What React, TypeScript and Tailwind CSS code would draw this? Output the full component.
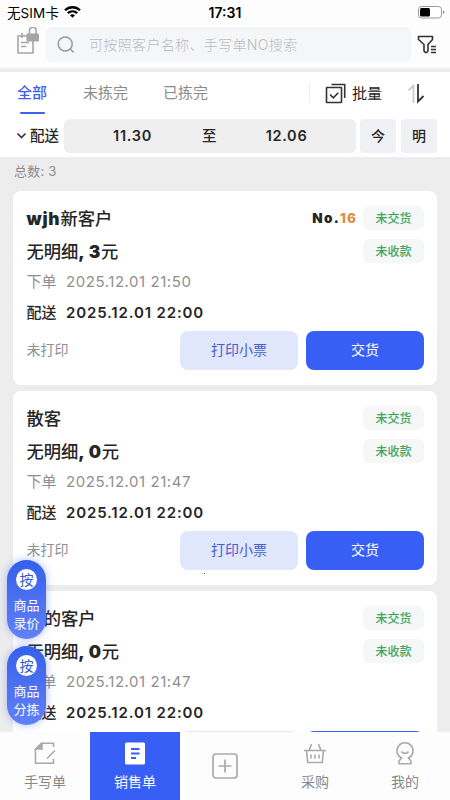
import type { ReactNode } from "react";

interface Order {
  id: number;
  name: ReactNode;
  no?: number;
  amount: number;
  created: string;
  delivery: string;
}

const orders: Order[] = [
  {
    id: 1,
    name: (
      <>
        <b className="font-black tracking-[0.8px]">wjh</b>新客户
      </>
    ),
    no: 16,
    amount: 3,
    created: "2025.12.01 21:50",
    delivery: "2025.12.01 22:00",
  },
  { id: 2, name: "散客", amount: 0, created: "2025.12.01 21:47", delivery: "2025.12.01 22:00" },
  { id: 3, name: "我的客户", amount: 0, created: "2025.12.01 21:47", delivery: "2025.12.01 22:00" },
];

export default function App() {
  return (
    <div className="relative flex h-[800px] w-[450px] flex-col overflow-hidden bg-[#ededed] font-['Inter','Noto_Sans_CJK_SC',sans-serif] text-[#262626]">
      <StatusBar />
      <SearchBar />
      <Filters />
      <div className="flex min-h-0 flex-1 flex-col overflow-hidden px-[13px]">
        <div className="h-[34px] shrink-0 pl-px text-[13px] leading-[29px] tracking-[0.2px] text-[#8c8c8c]">总数: 3</div>
        <div className="flex flex-col gap-1.5">
          {orders.map((order) => (
            <OrderCard key={order.id} order={order} />
          ))}
        </div>
      </div>
      <TabBar />
      <div className="absolute top-[560px] left-[7px] flex flex-col gap-[7px]">
        <FloatButton second="录价" />
        <FloatButton second="分拣" />
      </div>
      <span className="absolute top-[573px] left-[204px] size-px bg-[#604040]" />
    </div>
  );
}

const StatusBar = () => (
  <div className="grid h-6 shrink-0 grid-cols-3 items-center bg-[#fdfdfd] pr-[5px] pl-[7px] text-black">
    <div className="flex items-center gap-[5px] pt-px text-[13.5px] leading-[22px]">
      <span className="tracking-[0.1px]">无SIM卡</span>
      <svg className="-mt-px" width="17" height="12" viewBox="0 0 17 12" fill="none" stroke="#000" strokeWidth="2.3">
        <path d="M1 4.3C5.2.2 11.8.2 16 4.3" />
        <path d="M3.8 7.2c2.7-2.5 6.7-2.5 9.4 0" />
        <path d="M8.5 11.7 6 9.2c1.4-1.3 3.6-1.3 5 0Z" fill="#000" stroke="none" />
      </svg>
    </div>
    <span className="pr-[2px] text-center text-[14px] font-semibold">17:31</span>
    <div className="flex justify-end">
      <svg width="27" height="13" viewBox="0 0 27 13">
        <rect x=".5" y=".5" width="23" height="11.5" rx="3" fill="#fff" stroke="#999" />
        <rect x="2" y="2" width="10" height="8.5" rx="1.5" fill="#000" />
        <path d="M25 4.5c1.8.5 1.8 3 0 3.5Z" fill="#888" />
      </svg>
    </div>
  </div>
);

const SearchBar = () => (
  <div className="flex h-11 shrink-0 items-start bg-[#fdfdfd] pt-[3px] pl-4">
    <svg className="mr-1.5" width="24" height="29" viewBox="0 0 24 29" fill="none" stroke="#a5a5a5" strokeWidth="1.6">
      <path d="M11 9H2v17h15V14" />
      <path d="M6 6v5M5 15.500h8M5 19.500h5" />
      <path d="M13.500 7V3.500a3.300 3.300 0 0 1 6.600 0V7" />
      <rect x="10.500" y="6.500" width="12.500" height="8" rx="1" fill="#a5a5a5" stroke="none" />
    </svg>
    <div className="flex h-[35px] w-[365px] items-center rounded-md bg-[#f5f6f8] pl-[11px]">
      <svg width="18" height="18" viewBox="0 0 18 18" fill="none" stroke="#999" strokeWidth="1.5">
        <circle cx="8.2" cy="8" r="7" />
        <path d="m13.200 13 3.500 3.500" />
      </svg>
      <span className="ml-3.5 text-[14px] font-light tracking-[0.35px] text-[#b8bbc0]">可按照客户名称、手写单NO搜索</span>
    </div>
    <svg className="mt-[8px] ml-[6px]" width="21" height="20" viewBox="0 0 21 20" fill="none" stroke="#333" strokeWidth="1.6" strokeLinejoin="round">
      <path d="M1.500 1.500h14v3L11 9.500V16l-1.300 1.500H8.300L7 16V9.500L1.500 4.500Z" />
      <path d="M14 11.500h5M14 14.500h5M14 17.500h5" />
    </svg>
  </div>
);

const Filters = () => (
  <div className="shrink-0 border-t-4 border-[#ededed] bg-white">
    <div className="flex h-[47px] items-start pl-[17px] text-[15px] leading-[41px]">
      <div className="flex w-[30px] flex-col items-center whitespace-nowrap text-[#3c63e8]">
        <span className="h-10 font-medium">全部</span>
        <span className="h-0.5 w-[25px] rounded-full bg-[#3c63e8]" />
      </div>
      <span className="ml-9 text-[#8c8c8c]">未拣完</span>
      <span className="ml-[35px] text-[#8c8c8c]">已拣完</span>
      <span className="mt-3 ml-[101px] h-[19px] w-px bg-[#eee]" />
      <svg className="mt-[11px] ml-[15px]" width="22" height="21" viewBox="0 0 22 21" fill="none" stroke="#333" strokeWidth="1.6">
        <rect x="1.500" y="4.500" width="15" height="15" rx=".5" />
        <path d="M6.500 1.500h13.200V15M5 11.500l3.300 3.300 5-5" />
      </svg>
      <span className="ml-[5px] pt-px">批量</span>
      <svg className="mt-3 ml-[25px]" width="20" height="20" viewBox="0 0 20 20" fill="none" strokeWidth="1.8">
        <path d="M1.500 6.500 6.500 1.500V19" stroke="#ccc" />
        <path d="M11 0v17.500L16.500 12" stroke="#333" />
      </svg>
    </div>
    <div className="flex h-[38px] items-start pl-4 text-[14.5px] font-semibold">
      <svg className="mt-[13px]" width="11" height="8" viewBox="0 0 11 8" fill="none" stroke="#333" strokeWidth="1.6">
        <path d="m1.500 1.500 4 4 4-4" />
      </svg>
      <span className="ml-[3px] w-[34px] text-[14.5px] leading-[34px] font-medium">配送</span>
      <div className="grid h-[34px] w-[292px] grid-cols-[137px_17px_137px] items-center rounded-md bg-[#efefef] text-center tracking-[0.7px]">
        <span>11.30</span>
        <span className="font-medium">至</span>
        <span>12.06</span>
      </div>
      <span className="ml-1 h-[34px] w-9 rounded bg-[#f0f1f4] text-center text-[14px] leading-[34px] font-medium">今</span>
      <span className="ml-[5px] h-[34px] w-9 rounded bg-[#f0f1f4] text-center text-[14px] leading-[34px] font-medium">明</span>
    </div>
  </div>
);

const Badge = ({ children }: { children: ReactNode }) => (
  <span className="mb-0.5 h-6 w-[61px] shrink-0 rounded-md bg-[#f6f7f7] text-center text-[12px] leading-[25px] text-[#3ea55c]">
    {children}
  </span>
);

const OrderCard = ({ order }: { order: Order }) => (
  <div className="flex h-[194px] shrink-0 flex-col rounded-lg bg-white pt-[11px] pr-[13px] pl-[13.5px]">
    <div className="flex h-[33px] items-center text-[17.3px] font-medium">
      <span className="flex-1">{order.name}</span>
      {order.no && (
        <span className="mr-[6px] text-[13.5px] font-black tracking-[1.3px]">
          No.<span className="font-extrabold tracking-[1px] text-[#df8a43]">{order.no}</span>
        </span>
      )}
      <Badge>未交货</Badge>
    </div>
    <div className="flex h-[33px] items-center text-[17.3px] font-medium">
      <span className="flex-1">
        无明细<b className="font-black tracking-[0.7px]">, {order.amount}</b>元
      </span>
      <Badge>未收款</Badge>
    </div>
    <div className="flex h-[29px] items-center text-[15px] text-[#8f8f8f]">
      <span className="w-[39.5px]">下单</span>
      <span className="tracking-[0.55px]">{order.created}</span>
    </div>
    <div className="flex h-8 items-center text-[15px] font-semibold">
      <span className="w-[39.5px] font-medium">配送</span>
      <span className="tracking-[0.85px]">{order.delivery}</span>
    </div>
    <div className="mt-[2px] flex h-[39px] items-center text-[14px] leading-[20px]">
      <span className="flex-1 pb-px text-[#8f8f8f]">未打印</span>
      <button className="h-[39px] w-[118px] rounded-lg bg-[#e0e6fc] pb-px text-[#4560cc]">打印小票</button>
      <button className="ml-2 h-[39px] w-[118px] rounded-lg bg-[#385ff5] pb-px text-white">交货</button>
    </div>
  </div>
);

const FloatButton = ({ second }: { second: string }) => (
  <div className="flex h-[79px] w-[39px] flex-col items-center rounded-full bg-linear-to-b from-[#3460eb] to-[#6380f7] pt-[9px] text-[13px] leading-[18px] text-white shadow-[0_0_8px_rgba(70,110,245,0.45)]">
    <span className="mb-[6px] flex size-[21px] shrink-0 items-center justify-center rounded-full bg-white text-[14px] text-[#3159d4]">按</span>
    <span>商品</span>
    <span>{second}</span>
  </div>
);

const TabBar = () => (
  <div className="grid h-[68px] shrink-0 grid-cols-5 bg-[#fdfdfd] text-[14px] text-[#888]">
    <TabItem label="手写单">
      <svg width="22" height="23" viewBox="0 0 22 23" fill="none" stroke="#aaa" strokeWidth="1.6">
        <path d="M19.500 5V1.300H7.500L1.500 7v14.300H19.500V17M13 16.500l8-8" />
        <path d="M8 1.500V7H2Z" fill="#aaa" />
      </svg>
    </TabItem>
    <TabItem label="销售单" active>
      <svg width="20" height="23" viewBox="0 0 20 23">
        <rect y=".5" width="20" height="22" rx="1.500" fill="#fff" />
        <path d="M6 7h8.500M6 11.500h8.500M6 16h5" stroke="#385ff5" strokeWidth="1.8" />
      </svg>
    </TabItem>
    <div className="flex items-center justify-center">
      <svg width="26" height="26" viewBox="0 0 26 26" fill="none" stroke="#aaa" strokeWidth="1.7">
        <rect x="1" y="1" width="24" height="24" rx="3" />
        <path d="M13 6.500v13M6.500 13h13" />
      </svg>
    </div>
    <TabItem label="采购">
      <svg width="22" height="21" viewBox="0 0 22 21" fill="none" stroke="#aaa" strokeWidth="1.6">
        <path d="M0 7.500h22M2.500 7.500l1.200 12h14.600l1.200-12M7.500 1 5 7.500M14.500 1 17 7.500M7 11.500v4M11 11.500v4M15 11.500v4" />
      </svg>
    </TabItem>
    <TabItem label="我的">
      <svg width="18" height="23" viewBox="0 0 18 23" fill="none" stroke="#aaa" strokeWidth="1.6">
        <path d="M5.500 16a8 8 0 1 1 7 0l2.500 3v2.700H3V19Z" />
        <path d="M5.500 9.500c1.700 2.500 5.300 2.500 7 0" />
      </svg>
    </TabItem>
  </div>
);

const TabItem = ({ label, active, children }: { label: string; active?: boolean; children: ReactNode }) => (
  <div className={`flex flex-col items-center pt-[9px] ${active ? "bg-[#385ff5] text-white" : ""}`}>
    <span className="flex h-6 items-center">{children}</span>
    <span className="mt-[7px] leading-[20px]">{label}</span>
  </div>
);
